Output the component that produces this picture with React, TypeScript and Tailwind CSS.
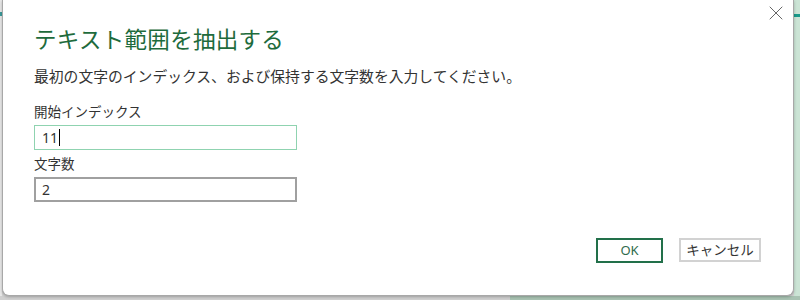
import { X } from 'lucide-react';

const font = { fontFamily: '"Noto Sans", "Noto Sans CJK JP", sans-serif' };

export default function App() {
  return (
    <div
      className="relative w-[800px] h-[300px] overflow-hidden bg-[#d4d4d4] flex flex-col"
      style={font}
    >
      {/* sheet behind the dialog */}
      <div className="flex-1 flex">
        <div className="w-[2px] bg-[#e8e8e8] flex flex-col">
          <div className="h-[12px]" />
          <div className="h-[4px] bg-[#3a9a9a]" />
        </div>
        <div className="flex-1 bg-white rounded-b-[7px] border-r border-b border-l border-[#a8a8a8] shadow-[0_1px_3px_rgba(0,0,0,0.25)] flex flex-col relative">
          <button className="absolute right-[5px] top-[1px] text-[#666]">
            <X size={24} strokeWidth={1} />
          </button>

          <div className="pl-[31px] pt-[25px] flex flex-col">
            <h1 className="text-[22.5px] leading-[30px] text-[#1e6b3c] tracking-[0.3px]">
              テキスト範囲を抽出する
            </h1>
            <p className="mt-[12px] text-[14.8px] leading-[18px] text-[#333]">
              最初の文字のインデックス、および保持する文字数を入力してください。
            </p>

            <label className="mt-[18px] text-[13.5px] leading-[18px] text-[#333]">開始インデックス</label>
            <div className="mt-[4px] w-[263px] h-[25px] border border-[#8fd3b0] flex items-center px-[7px] text-[14px] text-[#333]">
              <span>11</span>
              <span className="ml-[1px] w-px h-[17px] bg-black" />
            </div>

            <label className="mt-[5px] text-[13.5px] leading-[18px] text-[#333]">文字数</label>
            <div className="mt-[4px] w-[263px] h-[25px] border-2 border-[#a0a0a0] flex items-center px-[6px] text-[14px] text-[#333]">
              2
            </div>
          </div>

          <div className="mt-auto mb-[32px] pr-[32px] flex justify-end gap-[16px]">
            <button className="w-[67px] h-[25px] border-2 border-[#22704a] text-[13px] text-[#2f6b4c] flex items-center justify-center">
              OK
            </button>
            <button className="w-[82px] h-[24px] border-2 border-[#d2d2d2] text-[13.5px] text-[#333] flex items-center justify-center">
              キャンセル
            </button>
          </div>
        </div>
        <div className="w-[6px] bg-[#cbe4d5] flex flex-col">
          <div className="h-[14px]" />
          <div className="h-[3px] bg-[#1a9a8a]" />
        </div>
      </div>
      <div className="h-[4px] flex">
        <div className="w-[510px] bg-[#d0d0d0]" />
        <div className="flex-1 bg-[#a9c3b3]" />
      </div>
    </div>
  );
}
